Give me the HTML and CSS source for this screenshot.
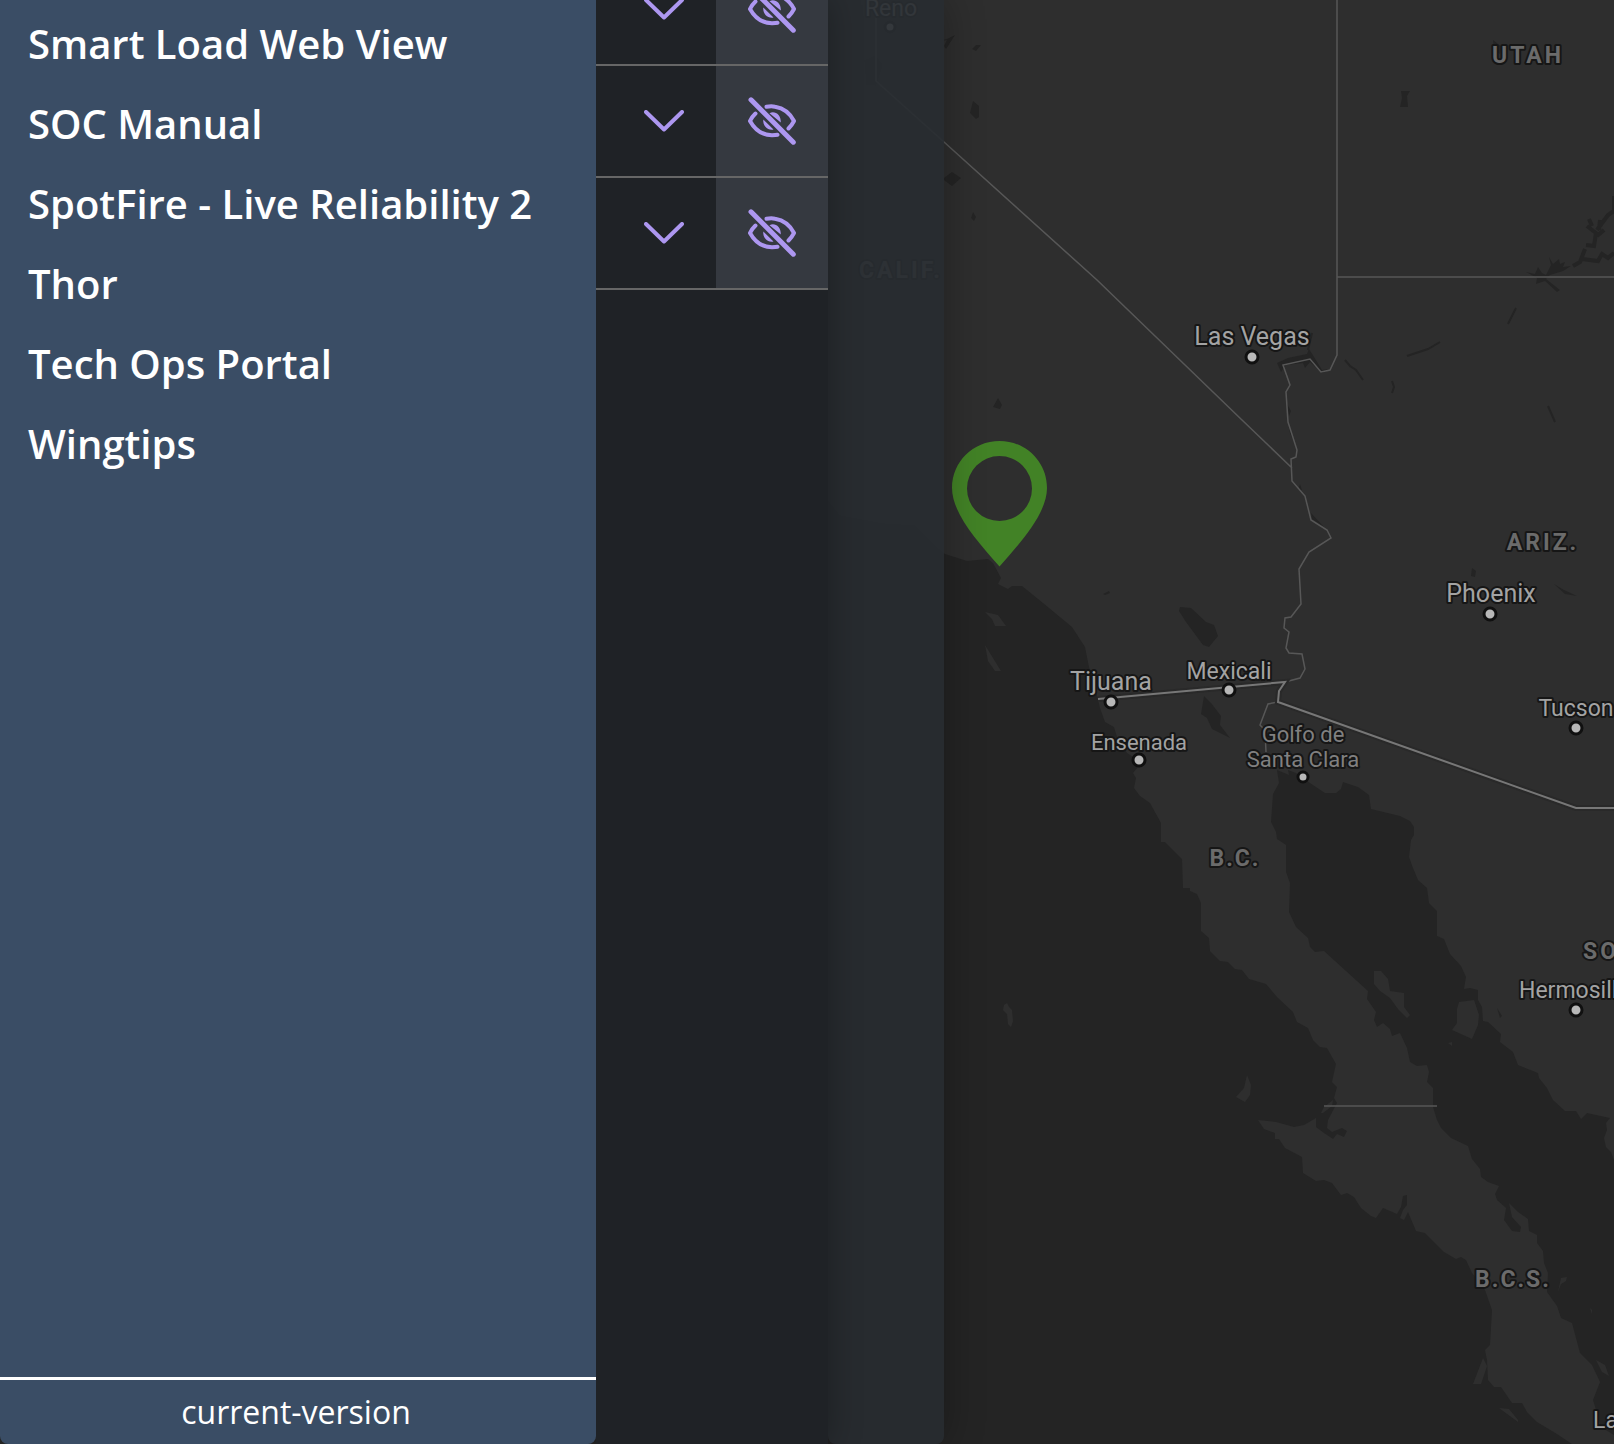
FILE: index.html
```html
<!DOCTYPE html>
<html lang="en">
<head>
<meta charset="utf-8">
<title>Operations map</title>
<link rel="stylesheet" href="styles.css">
</head>
<body>
<div class="app">
  <svg class="map" viewBox="0 0 1614 1444" preserveAspectRatio="xMinYMin slice" role="img" aria-label="Map">
    <path class="land" d="M0 0H1614V1160L1611 1152 1606 1147 1604 1138 1607 1130 1606 1123 1610 1118 1587 1113 1581 1119 1576 1111 1565 1111 1553 1100 1547 1088 1539 1078 1538 1073 1518 1065 1513 1052 1500 1042 1501 1034 1488 1022 1483 1021 1482 1007 1478 1000 1478 990 1470 988 1464 989 1466 977 1461 966 1450 954 1444 939 1437 936 1437 911 1429 903 1427 888 1418 880 1413 868 1409 857 1411 840 1414 835 1414 827 1410 821 1400 816 1371 809 1369 795 1358 787 1343 782 1341 789 1336 793 1325 793 1307 781 1296 773 1288 770 1289 775 1277 770 1279 783 1273 794 1271 822 1276 832 1277 839 1286 845 1286 872 1290 883 1289 912 1296 927 1308 938 1310 947 1315 952 1324 951 1368 991 1367 999 1376 1012 1374 1020 1377 1027 1383 1023 1390 1029 1392 1036 1400 1033 1407 1048 1410 1062 1417 1066 1427 1065 1429 1072 1427 1082 1433 1088 1433 1107 1437 1120 1441 1128 1451 1138 1468 1146 1472 1159 1480 1169 1481 1177 1488 1182 1499 1186 1495 1194 1497 1200 1506 1208 1504 1220 1512 1231 1520 1232 1521 1227 1512 1217 1509 1203 1518 1212 1528 1219 1529 1231 1537 1235 1537 1243 1543 1251 1544 1263 1548 1273 1547 1292 1557 1306 1561 1318 1572 1323 1580 1353 1592 1365 1600 1382 1593 1400 1596 1410 1601 1427 1614 1435V1444H1572L1557 1434 1537 1422 1527 1412 1522 1403 1512 1403 1501 1387 1494 1387 1488 1380 1487 1360 1485 1350 1490 1345 1492 1310 1485 1290 1472 1273 1466 1260 1461 1257 1456 1259 1444 1252 1425 1233 1416 1231 1408 1212 1404 1220 1400 1218 1403 1210 1407 1205 1407 1195 1403 1196 1401 1207 1397 1214 1383 1208 1376 1218 1371 1216 1361 1208 1354 1197 1347 1193 1341 1195 1332 1183 1324 1180 1316 1181 1303 1173 1302 1157 1285 1148 1279 1139 1275 1139 1275 1133 1264 1129 1258 1120 1276 1122 1294 1127 1304 1125 1316 1118 1316 1127 1324 1133 1333 1139 1337 1134 1344 1137 1347 1131 1342 1128 1332 1132 1327 1128 1328 1120 1337 1103 1334 1098 1337 1087 1332 1082 1336 1064 1327 1048 1320 1047 1313 1040 1308 1028 1297 1022 1293 1012 1277 997 1266 984 1249 979 1242 970 1235 969 1228 962 1220 961 1210 951 1209 938 1201 931 1201 903 1197 894 1190 891 1190 888 1183 888 1182 859 1165 842 1161 842 1161 823 1150 803 1140 796 1134 788 1136 778 1133 773 1138 767 1138 760 1127 753 1117 737 1114 727 1105 722 1100 708 1098 699 1089 667 1085 647 1072 627 1043 603 1022 586 1012 586 1008 589 998 584 1001 578 993 563 988 559 967 561 945 554 935 545 915 525 883 523 840 515 820 490 800 420H0Z"/>
    <g class="land">
      <path d="M985 612 998 615 1006 626H995L992 619ZM985 645 1001 671H995L988 661ZM1007 1003 1009 1007 1012 1010 1013 1021 1011 1027 1008 1024 1007 1014 1003 1010 1004 1005ZM1374 971H1381L1388 979 1390 991 1404 993V1007L1410 1015 1407 1018 1398 1009 1390 998 1380 991 1374 984ZM1459 1002 1474 1000 1479 1015 1478 1025 1472 1039 1452 1030 1457 1023 1457 1009ZM1247 1075 1251 1085 1250 1095 1245 1102 1236 1097 1244 1088ZM1321 1113 1324 1107 1333 1100 1332 1106 1323 1113ZM1483 1358 1487 1366 1481 1384H1473ZM1499 1408 1509 1409 1518 1420 1518 1422ZM1596 1360 1605 1365 1609 1376 1602 1372ZM1558 1292 1561 1278 1567 1277 1566 1281 1561 1284ZM1448 1043 1452 1042 1452 1046ZM1430 1048 1433 1051ZM1590 1308 1592 1310 1592 1314ZM1489 1174 1492 1176Z"/>
    </g>
    <g class="water">
      <path d="M955 35 946 49 944 46 947 40 936 42 947 39ZM972 49 976 45 981 45 976 51ZM973 101 979 106 979 117 976 119 970 113ZM944 178 952 172 961 178 952 186 944 180ZM973 212 976 217 974 221 971 218ZM998 398 1002 405 1000 409 993 407ZM1103 594 1109 591 1110 593 1105 595ZM1180 607 1191 608 1206 622 1214 625 1218 636 1209 647 1203 645 1186 622 1179 611ZM1204 696 1211 703 1221 716 1220 725 1230 738 1212 729 1207 718 1201 714ZM1401 91 1410 91 1407 96 1408 107 1400 107 1402 98ZM1493 40 1502 47 1500 54 1494 50ZM1472 568 1476 571 1475 577 1471 576ZM1554 584 1564 590 1577 596 1565 594ZM1497 1008 1502 1016 1500 1018ZM864 60 876 55 883 65 876 86 866 85ZM1277 363 1288 358 1307 354 1309 349 1314 357 1322 370 1330 369 1322 373 1310 362 1305 368 1303 363 1286 365 1281 372ZM1287 404 1291 411 1289 416ZM1288 423 1296 447 1290 433ZM1300 484 1302 490 1298 490ZM1311 513 1324 527 1312 519Z"/>
      <path class="river" d="M1516 308 1508 324M1440 342 1428 349 1407 356M1345 360 1350 366 1356 370 1363 380M1392 381 1394 387 1392 393M1548 406 1555 422M1312 333 1308 350"/>
      <path d="M1526 272 1535 274 1538 267 1542 273 1546 275 1551 265 1549 257 1553 264 1559 259 1560 264 1565 262 1563 267 1571 266 1563 271 1550 275 1546 279 1560 290 1557 292 1545 281 1536 284 1537 278Z"/>
      <path class="lake-arm" d="M1573 266 1580 262 1585 249M1582 259 1598 261 1602 254 1608 258 1614 253M1586 245 1594 246 1596 233 1587 226M1589 219 1592 226M1597 236 1604 230M1597 230 1608 215 1614 211V196M1600 220 1599 230"/>
    </g>
    <path class="state-line" d="M876 0V81L944 142 1097 280 1242 420 1292 468M1337 0V355L1330 370 1321 372 1310 359 1283 365 1290 385 1286 392 1288 422 1297 450 1296 457 1291 459 1292 481 1305 496 1311 520 1327 530 1331 538 1309 552 1299 569 1301 604 1291 617 1285 618 1284 628 1289 632 1286 648 1289 653 1302 654 1305 669 1300 678 1285 682M1337 277H1614M1278 702 1268 704 1260 725 1265 730 1266 752M1324 1106H1437"/>
    <path class="border-glow" d="M1098 699 1285 682 1279 691 1278 702 1576 808H1614"/>
    <path class="border-line" d="M1098 699 1285 682 1279 691 1278 702 1576 808H1614"/>
    <g class="city-dot">
      <circle cx="890" cy="27" r="5"/>
      <circle cx="1252" cy="357" r="6"/>
      <circle cx="1490" cy="614" r="6"/>
      <circle cx="1576" cy="728" r="6"/>
      <circle cx="1229" cy="690" r="6"/>
      <circle cx="1111" cy="702" r="6"/>
      <circle cx="1139" cy="760" r="6"/>
      <circle cx="1303" cy="777" r="5"/>
      <circle cx="1576" cy="1010" r="6"/>
    </g>
    <g class="region">
      <text x="901" y="278">CALIF.</text>
      <text x="1528" y="63">UTAH</text>
      <text x="1543" y="550">ARIZ.</text>
      <text class="abbr" x="1235" y="866">B.C.</text>
      <text class="abbr" x="1513" y="1287">B.C.S.</text>
      <text class="from-start" x="1583" y="959">SON.</text>
    </g>
    <g class="city">
      <text x="891" y="16">Reno</text>
      <text class="large" x="1252" y="345">Las Vegas</text>
      <text class="large" x="1491" y="602">Phoenix</text>
      <text class="large" x="1111" y="690">Tijuana</text>
      <text x="1229" y="679">Mexicali</text>
      <text x="1576" y="716">Tucson</text>
      <text class="small" x="1139" y="750">Ensenada</text>
      <text class="small town" x="1303" y="742">Golfo de</text>
      <text class="small town" x="1303" y="767">Santa Clara</text>
      <text class="from-start" x="1519" y="998">Hermosillo</text>
      <text class="from-start" x="1593" y="1428">La Paz</text>
    </g>
    <path class="pin" fill-rule="evenodd" d="M999.500 441C973 441 952 462 952 488C952 512 975 539 999.500 566.500C1024 539 1047 512 1047 488C1047 462 1026 441 999.500 441ZM999.500 456A32.500 32.500 0 1 1 999.500 521A32.500 32.500 0 1 1 999.500 456Z"/>
  </svg>

  <nav class="sidebar" aria-label="Applications">
    <ul class="links">
      <li><a href="#smart-load">Smart Load Web View</a></li>
      <li><a href="#soc-manual">SOC Manual</a></li>
      <li><a href="#spotfire">SpotFire - Live Reliability 2</a></li>
      <li><a href="#thor">Thor</a></li>
      <li><a href="#tech-ops">Tech Ops Portal</a></li>
      <li><a href="#wingtips">Wingtips</a></li>
    </ul>
    <footer class="version">current-version</footer>
  </nav>

  <svg class="symbols" aria-hidden="true">
    <symbol id="chevron" viewBox="0 0 40 22"><path class="stroke" d="M2 2 20 19.500 38 2"/></symbol>
    <symbol id="eye-off" viewBox="0 0 48 48">
      <path class="stroke" d="M18.500 9.800C22 9.200 25 9.300 27 9.700C36 11.200 42.500 17 46 24C44.500 27 42.700 29.300 40.500 31.500M7.500 16.500C5 18.800 3.200 21.300 2 24C7 33 15 38.200 24 38.200C26 38.200 28 38.200 29.500 37.800"/>
      <path class="solid" d="M21.500 16.200C27 13.400 33.200 18 32.800 25.500ZM15.300 22.500C14.500 29 20 33.800 25.500 32.500Z"/>
      <path class="stroke slash" d="M3 2.800 45.300 45.200"/>
    </symbol>
  </svg>

  <section class="layers" aria-label="Layers">
    <ul class="rows">
      <li class="row">
        <button class="expand" type="button" aria-label="Expand"><svg class="chevron"><use href="#chevron"/></svg></button>
        <button class="toggle" type="button" aria-label="Show layer"><svg class="eye"><use href="#eye-off"/></svg></button>
      </li>
      <li class="row">
        <button class="expand" type="button" aria-label="Expand"><svg class="chevron"><use href="#chevron"/></svg></button>
        <button class="toggle" type="button" aria-label="Show layer"><svg class="eye"><use href="#eye-off"/></svg></button>
      </li>
      <li class="row">
        <button class="expand" type="button" aria-label="Expand"><svg class="chevron"><use href="#chevron"/></svg></button>
        <button class="toggle" type="button" aria-label="Show layer"><svg class="eye"><use href="#eye-off"/></svg></button>
      </li>
    </ul>
  </section>

  <aside class="rail"></aside>
</div>
</body>
</html>
```
FILE: styles.css
```css
* { box-sizing: border-box; }

body {
  margin: 0;
  background: #242424;
  font-family: "Open Sans", sans-serif;
}

ul {
  list-style: none;
  margin: 0;
  padding: 0;
}

.app {
  position: relative;
  display: flex;
  min-height: 100vh;
  overflow: hidden;
}

/* Map layer, under the panels */
.map {
  position: absolute;
  inset: 0;
  width: 100%;
  height: 100%;
  background: #242424;
  font-family: Roboto, sans-serif;
}

.land { fill: #2e2e2e; }
.water { fill: #242424; }

.river,
.lake-arm {
  fill: none;
  stroke: #242424;
  stroke-width: 2;
}

.lake-arm { stroke-width: 4; }

.state-line,
.border-line,
.border-glow {
  fill: none;
  stroke: #575757;
  stroke-width: 1.5;
}

.border-line {
  stroke: #777;
  stroke-width: 2;
}

.border-glow {
  stroke: #292929;
  stroke-width: 6;
}

.city-dot {
  fill: #b8b8b8;
  stroke: #101010;
  stroke-width: 3;
}

.map text {
  text-anchor: middle;
  paint-order: stroke;
  stroke: #161616;
  stroke-width: 4;
  stroke-linejoin: round;
}

.map .from-start { text-anchor: start; }

.region {
  fill: #6b6b6b;
  font-size: 23px;
  font-weight: 700;
  letter-spacing: 3px;
}

.abbr { letter-spacing: 2px; }

.city {
  fill: #a3a3a3;
  font-size: 23px;
}

.large { font-size: 25px; }
.small { font-size: 22px; }
.town { fill: #808080; }
.pin { fill: #428226; }

/* Application links */
.sidebar {
  position: relative;
  z-index: 3;
  flex: none;
  display: flex;
  flex-direction: column;
  width: 596px;
  background: #3a4d65;
  border-radius: 0 0 8px 8px;
  color: #fff;
}

.links {
  flex: 1;
  padding: 4px 28px;
}

.links a {
  display: block;
  color: inherit;
  font-size: 40px;
  font-weight: 600;
  line-height: 80px;
  text-decoration: none;
  white-space: nowrap;
}

.version {
  padding-right: 4px;
  border-top: 3px solid #fff;
  font-size: 32px;
  line-height: 64px;
  text-align: center;
}

/* Layer list, scrolled part of the way down */
.layers {
  position: relative;
  z-index: 2;
  flex: none;
  width: 232px;
  background: #1f2226;
  box-shadow: 0 0 32px rgba(0, 0, 0, 0.3);
}

.rows { margin-top: -46px; }

.row {
  display: flex;
  height: 112px;
  border-bottom: 2px solid #666;
}

.row button {
  display: grid;
  place-items: center;
  margin: 0;
  padding: 0;
  border: 0;
  background: none;
  color: #ad97f0;
}

.row .expand {
  flex: 1;
  padding-left: 16px;
}

.row .toggle {
  width: 112px;
  background: #353940;
}

.chevron {
  width: 40px;
  height: 22px;
}

.eye {
  width: 48px;
  height: 48px;
}

.symbols {
  display: none;
}

.stroke {
  fill: none;
  stroke: currentColor;
  stroke-width: 4;
  stroke-linecap: round;
  stroke-linejoin: round;
}

.slash { stroke-width: 5; }
.solid { fill: currentColor; }

/* Translucent panel edge over the map */
.rail {
  position: relative;
  z-index: 1;
  flex: none;
  width: 116px;
  background: rgba(40, 45, 49, 0.92);
  border-radius: 0 0 8px 8px;
  box-shadow: 0 0 40px rgba(0, 0, 0, 0.3);
}
```
